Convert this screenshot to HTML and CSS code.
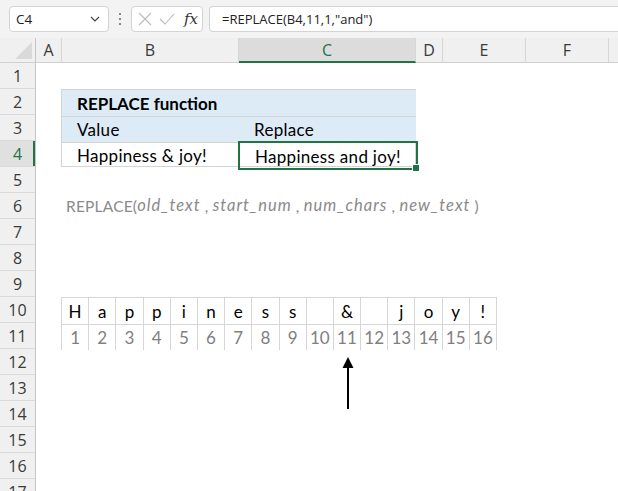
FILE: index.html
```html
<!DOCTYPE html>
<html>
<head>
<meta charset="utf-8">
<link rel="stylesheet" href="styles.css">
</head>
<body>
<div class="app">
  <div class="topbar">
    <div class="namebox">
      <span class="nb-text">C4</span>
      <svg class="chev" width="10" height="6" viewBox="0 0 10 6"><path d="M1 1 L5 5 L9 1" fill="none" stroke="#444" stroke-width="1.2"/></svg>
    </div>
    <div class="dots"><span></span><span></span><span></span></div>
    <div class="btnbox">
      <svg width="14" height="14" viewBox="0 0 14 14"><path d="M1 1 L13 13 M13 1 L1 13" stroke="#bcbcbc" stroke-width="1.1" fill="none"/></svg>
      <svg width="16" height="14" viewBox="0 0 16 14"><path d="M1 7 L6 12 L15 2" stroke="#bcbcbc" stroke-width="1.1" fill="none"/></svg>
      <span class="fx">fx</span>
    </div>
    <div class="formula">=REPLACE(B4,11,1,"and")</div>
  </div>
  <div class="sheet">
    <div class="corner"><svg width="17" height="17" viewBox="0 0 17 17"><path d="M17 0 L17 17 L0 17 Z" fill="#d9d9d9"/></svg></div>
    <div class="colheads">
      <div class="ch w-a">A</div>
      <div class="ch w-b">B</div>
      <div class="ch w-c sel">C</div>
      <div class="ch w-d">D</div>
      <div class="ch w-e">E</div>
      <div class="ch w-f">F</div>
      <div class="ch w-g"></div>
    </div>
    <div class="rowheads">
      <div class="rh">1</div><div class="rh">2</div><div class="rh">3</div><div class="rh sel">4</div>
      <div class="rh">5</div><div class="rh">6</div><div class="rh">7</div><div class="rh">8</div>
      <div class="rh">9</div><div class="rh">10</div><div class="rh">11</div><div class="rh">12</div>
      <div class="rh">13</div><div class="rh">14</div><div class="rh">15</div><div class="rh">16</div>
      <div class="rh">17</div>
    </div>
    <div class="cells">
      <div class="tbl">
        <div class="tc head span2 bold">REPLACE function</div>
        <div class="tc head rowline">Value</div>
        <div class="tc head rowline">Replace</div>
        <div class="tc rowline colline">Happiness &amp; joy!</div>
        <div class="tc rowline active">Happiness and joy!<span class="handle"></span></div>
      </div>
      <div class="syntax">REPLACE(<i>old_text</i> , <i>start_num</i> , <i>num_chars</i> , <i>new_text</i> )</div>
      <div class="chars">
        <div class="k">H</div><div class="k">a</div><div class="k">p</div><div class="k">p</div>
        <div class="k">i</div><div class="k">n</div><div class="k">e</div><div class="k">s</div>
        <div class="k">s</div><div class="k"></div><div class="k">&amp;</div><div class="k"></div>
        <div class="k">j</div><div class="k">o</div><div class="k">y</div><div class="k">!</div>
        <div class="k n">1</div><div class="k n">2</div><div class="k n">3</div><div class="k n">4</div>
        <div class="k n">5</div><div class="k n">6</div><div class="k n">7</div><div class="k n">8</div>
        <div class="k n">9</div><div class="k n">10</div><div class="k n">11</div><div class="k n">12</div>
        <div class="k n">13</div><div class="k n">14</div><div class="k n">15</div><div class="k n">16</div>
      </div>
      <svg class="arrow" width="12" height="52" viewBox="0 0 12 52"><path d="M6 0 L11.5 11 L0.5 11 Z" fill="#000"/><rect x="5" y="10" width="2" height="42" fill="#000"/></svg>
    </div>
  </div>
</div>
</body>
</html>
```

FILE: styles.css
```css
* { box-sizing: border-box; }
html, body { margin: 0; padding: 0; }
body { width: 618px; height: 491px; overflow: hidden; background: #fff; font-family: "Open Sans", "Noto Sans", sans-serif; }
.app { width: 618px; height: 491px; display: flex; flex-direction: column; }

.topbar { height: 38px; background: #f3f3f3; display: flex; align-items: center; padding: 0 0 1px 9px; flex: none; }
.namebox { width: 100px; height: 26px; background: #fff; border: 1px solid #d4d4d4; border-radius: 4px; display: flex; align-items: center; justify-content: space-between; padding: 0 8px 0 6px; font-size: 13.5px; color: #222; }
.chev { margin-top: 1px; }
.dots { width: 22px; display: flex; flex-direction: column; align-items: center; gap: 3px; }
.dots span { width: 2px; height: 2px; background: #8a8a8a; display: block; }
.btnbox { width: 72px; height: 26px; background: #fff; border: 1px solid #d4d4d4; border-radius: 4px; display: flex; align-items: center; padding: 0 4px 0 6px; gap: 7px; }
.fx { font-family: "DejaVu Serif", "Liberation Serif", serif; font-style: italic; font-size: 15px; color: #333; margin-left: 2px; }
.formula { flex: 1; height: 26px; margin-left: 6px; background: #fff; border: 1px solid #d4d4d4; border-right: none; border-radius: 4px 0 0 4px; display: flex; align-items: center; padding-left: 12px; font-size: 13px; color: #222; }

.sheet { flex: 1; display: grid; grid-template-columns: 36px 1fr; grid-template-rows: 25px 1fr; overflow: hidden; }
.corner { background: #f0f0f0; border-right: 1px solid #c6c6c6; border-bottom: 1px solid #d0d0d0; display: flex; align-items: flex-end; justify-content: flex-end; padding: 0 3px 3px 0; }
.colheads { display: flex; background: #f0f0f0; }
.ch { height: 25px; border-right: 1px solid #d6d6d6; border-bottom: 1px solid #d0d0d0; display: flex; align-items: center; justify-content: center; font-size: 16px; color: #3a3a3a; flex: none; }
.ch.sel { background: #dcdcdc; color: #217346; border-bottom: 2px solid #217346; }
.w-a { width: 26px; } .w-b { width: 177px; } .w-c { width: 177px; } .w-d { width: 27px; } .w-e { width: 83px; } .w-f { width: 83px; } .w-g { flex: 1; border-right: none; }

.rowheads { background: #f0f0f0; border-right: 1px solid #c6c6c6; display: flex; flex-direction: column; }
.rh { height: 26px; flex: none; border-bottom: 1px solid #dadada; display: flex; align-items: center; justify-content: center; font-size: 16px; color: #3a3a3a; }
.rh.sel { background: #e0e0e0; color: #217346; box-shadow: inset -2px 0 0 #217346; }

.cells { display: grid; grid-template-columns: 26px 177px 177px 27px 83px 83px 1fr; grid-template-rows: repeat(17, 26px); font-family: Lato, "Open Sans", sans-serif; font-size: 17px; letter-spacing: 0.3px; color: #000; }

.tbl { grid-row: 2 / 5; grid-column: 2 / 4; display: grid; grid-template-columns: 177px 177px; grid-template-rows: 26px 26px 26px; border: 1px solid #d4d4d4; margin-left: -1px; }
.tc { padding-left: 15px; display: flex; align-items: flex-end; padding-bottom: 2px; position: relative; }
.tc.head { background: #ddebf7; }
.tc.span2 { grid-column: 1 / 3; }
.tc.bold { font-weight: 700; letter-spacing: 0; }
.tc.rowline { border-top: 1px solid #d4d4d4; }
.tc.colline { border-right: 1px solid #d4d4d4; }
.tc.active { border: 2px solid #217346; margin: -1px -2px -2px -1px; padding-left: 15px; padding-bottom: 1px; }
.handle { position: absolute; right: -4px; bottom: -4px; width: 6px; height: 6px; background: #217346; border: 1px solid #fff; box-sizing: content-box; }

.syntax { grid-row: 6; grid-column: 2 / 8; padding-left: 4px; display: flex; align-items: flex-end; padding-bottom: 4px; font-size: 15.5px; letter-spacing: 0.2px; color: #8a8a8a; white-space: pre; }
.syntax i { font-style: italic; font-size: 16.5px; letter-spacing: 1px; }

.chars { grid-row: 10 / 12; grid-column: 2 / 8; justify-self: start; align-self: start; width: 436px; height: 53px; margin-left: -1px; display: grid; grid-template-columns: repeat(16, 1fr); grid-template-rows: 26px 25px; gap: 1px; padding: 1px; background: #d6d6d6; letter-spacing: 0; }
.k { background: #fff; display: flex; align-items: flex-end; justify-content: center; padding-bottom: 2px; }
.k.n { color: #808080; }

.arrow { grid-row: 12 / 15; grid-column: 3; justify-self: start; margin-left: 103px; margin-top: 8px; }
```
